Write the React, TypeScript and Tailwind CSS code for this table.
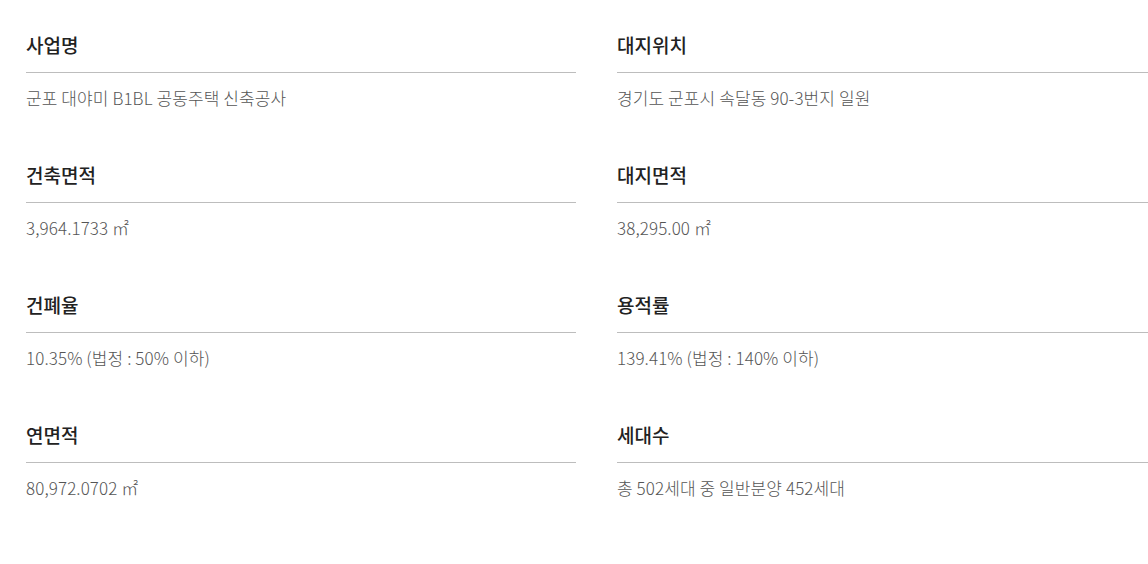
const items = [
  { title: "사업명", value: "군포 대야미 B1BL 공동주택 신축공사" },
  { title: "대지위치", value: "경기도 군포시 속달동 90-3번지 일원" },
  { title: "건축면적", value: "3,964.1733 ㎡" },
  { title: "대지면적", value: "38,295.00 ㎡" },
  { title: "건폐율", value: "10.35% (법정 : 50% 이하)" },
  { title: "용적률", value: "139.41% (법정 : 140% 이하)" },
  { title: "연면적", value: "80,972.0702 ㎡" },
  { title: "세대수", value: "총 502세대 중 일반분양 452세대" },
];

function InfoItem({ title, value }: { title: string; value: string }) {
  return (
    <div className="h-[130px]">
      <h3 className="border-b border-[#bdbdbd] pb-[14px] text-[19px] leading-[26px] font-medium text-[#222]">
        {title}
      </h3>
      <p className="mt-[14px] text-[17px] leading-[22px] font-light tracking-[0.1px] text-[#555]">
        {value}
      </p>
    </div>
  );
}

export default function App() {
  return (
    <div className="h-[564px] w-[1148px] overflow-hidden bg-white font-['Noto_Sans_CJK_KR','Noto_Sans',sans-serif]">
      <div className="grid w-[1167px] grid-cols-[550px_550px] gap-x-[41px] pt-[32px] pl-[26px]">
        {items.map((item) => (
          <InfoItem key={item.title} title={item.title} value={item.value} />
        ))}
      </div>
    </div>
  );
}
